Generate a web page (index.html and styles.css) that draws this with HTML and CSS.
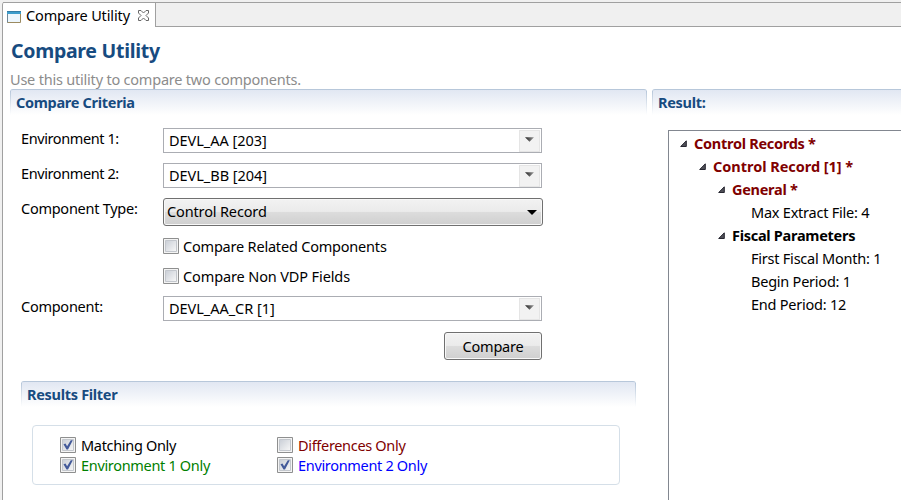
FILE: index.html
```html
<!DOCTYPE html>
<html lang="en">
<head>
<meta charset="utf-8">
<title>Compare Utility</title>
<link rel="stylesheet" href="styles.css">
</head>
<body>
<svg class="defs" width="0" height="0" aria-hidden="true">
  <defs>
    <linearGradient id="fade" x1="0" y1="0" x2="1" y2="0"><stop offset="0" stop-color="#222"/><stop offset="1" stop-color="#999"/></linearGradient>
    <linearGradient id="box" x1="0" y1="0" x2="1" y2="1"><stop offset="0" stop-color="#c9ced6"/><stop offset="1" stop-color="#f8f8f8"/></linearGradient>
    <symbol id="arrow" viewBox="0 0 10 5"><path d="M0 0h10L5 5z"/></symbol>
    <symbol id="twist" viewBox="0 0 7 7"><path d="M6.3.8v5.7H.7z" fill="#505058" stroke="#262630"/></symbol>
    <symbol id="off" viewBox="0 0 16 16"><path d="M.5.5h15v15H.5z" fill="#f4f4f4" stroke="#8e8f8f"/><path d="M2.5 2.5h11v11h-11z" fill="url(#box)" stroke="#c3c7cd"/></symbol>
    <symbol id="on" viewBox="0 0 16 16"><use href="#off"/><path d="M3.500 7.300l2-.8 1.600 2.800L10.800 3.200h2L8 12.600H6.500z" fill="#435a9a"/></symbol>
  </defs>
</svg>
<div class="app">
  <div class="tabs">
    <div class="tab">
      <svg class="window" width="14" height="12" viewBox="0 0 14 12"><path d="M.5.5h13v11H.5z" fill="#edf6fd" stroke="#9b8a60"/><path d="M0 0h14v3H0z" fill="#3d9dcc"/><path d="M0 0h14v1H0z" fill="#337da6"/><path d="M.5 3v8.500" stroke="#6f8796"/></svg>
      <span class="tab-name">Compare Utility</span>
      <svg width="11" height="11" viewBox="0 0 11 11" fill="#fff" stroke="#686868"><path d="M.5.5h2.500l2.500 2.500L8 .5h2.500V3L8 5.500 10.500 8v2.500H8L5.500 8 3 10.500H.5V8L3 5.500.5 3z"/></svg>
    </div>
    <div class="tab-rest"></div>
  </div>
  <h1>Compare Utility</h1>
  <p class="sub">Use this utility to compare two components.</p>
  <main>
    <section class="criteria">
      <h2 class="bar">Compare Criteria</h2>
      <div class="form">
        <div class="row"><label>Environment 1:</label><div class="field"><span>DEVL_AA [203]</span><i><svg width="9" height="5" fill="url(#fade)"><use href="#arrow"/></svg></i></div></div>
        <div class="row"><label>Environment 2:</label><div class="field"><span>DEVL_BB [204]</span><i><svg width="9" height="5" fill="url(#fade)"><use href="#arrow"/></svg></i></div></div>
        <div class="row type"><label class="long">Component Type:</label><div class="select"><span>Control Record</span><svg width="10" height="5"><use href="#arrow"/></svg></div></div>
        <div class="check solo"><svg width="16" height="16"><use href="#off"/></svg><span>Compare Related Components</span></div>
        <div class="check solo"><svg width="16" height="16"><use href="#off"/></svg><span class="fields">Compare Non VDP Fields</span></div>
        <div class="row component"><label class="long">Component:</label><div class="field"><span>DEVL_AA_CR [1]</span><i><svg width="9" height="5" fill="url(#fade)"><use href="#arrow"/></svg></i></div></div>
        <button>Compare</button>
      </div>
      <div class="filter">
        <h2 class="bar">Results Filter</h2>
        <div class="options">
          <div class="check"><svg width="16" height="16"><use href="#on"/></svg><span>Matching Only</span></div>
          <div class="check red"><svg width="16" height="16"><use href="#off"/></svg><span>Differences Only</span></div>
          <div class="check green"><svg width="16" height="16"><use href="#on"/></svg><span>Environment 1 Only</span></div>
          <div class="check blue"><svg width="16" height="16"><use href="#on"/></svg><span>Environment 2 Only</span></div>
        </div>
      </div>
    </section>
    <section class="result">
      <h2 class="bar">Result:</h2>
      <div class="tree">
        <div class="node l1 changed"><svg width="7" height="7"><use href="#twist"/></svg><span>Control Records *</span></div>
        <div class="node l2 changed"><svg width="7" height="7"><use href="#twist"/></svg><span>Control Record [1] *</span></div>
        <div class="node l3 changed"><svg width="7" height="7"><use href="#twist"/></svg><span>General *</span></div>
        <div class="node leaf"><span>Max Extract File: 4</span></div>
        <div class="node l3"><svg width="7" height="7"><use href="#twist"/></svg><span>Fiscal Parameters</span></div>
        <div class="node leaf"><span>First Fiscal Month: 1</span></div>
        <div class="node leaf"><span>Begin Period: 1</span></div>
        <div class="node leaf"><span>End Period: 12</span></div>
      </div>
    </section>
  </main>
</div>
</body>
</html>
```
FILE: styles.css
```css
* { box-sizing: border-box; }
body { margin: 0; width: 901px; height: 500px; overflow: hidden; background: #f0f0f0; color: #000; font: 14.5px/20px "Noto Sans", "Open Sans", sans-serif; letter-spacing: -.23px; white-space: nowrap; }
svg { display: block; flex: none; }
.defs { position: absolute; }
.app { height: 498px; margin: 2px 0 0 2px; border-left: 1px solid #a0a0a0; background: #fff; border-top-left-radius: 3px; }
.tabs { display: flex; height: 25px; }
.tab { display: flex; align-items: center; width: 153px; padding-left: 4px; border: 1px solid #a0a0a0; border-width: 1px 1px 0 0; }
.window { margin-top: 3px; }
.tab-name { width: 104px; margin: 0 8px 0 5px; letter-spacing: -.13px; }
.tab-rest { flex: 1; background: #f0f0f0; border: 1px solid #a0a0a0; border-width: 1px 0; }
h1 { margin: 11px 0 0 8px; font-size: 19.5px; line-height: 26px; color: #174b80; letter-spacing: -.28px; }
.sub { margin: 5px 0 0 7px; color: #8c8c8c; letter-spacing: -.21px; }
main { display: flex; gap: 5px; margin-left: 7px; }
.criteria { flex: none; width: 637px; }
.result { flex: none; width: 255px; }
.bar { position: relative; margin: 0; height: 26px; padding: 2px 0 0 6px; border-top: 1px solid #b7c7da; border-radius: 3px 3px 0 0; background: linear-gradient(#e1e7f2, #fff); font-size: 14.5px; line-height: 20px; color: #174b80; letter-spacing: -.3px; }
.bar::before, .bar::after { content: ""; position: absolute; top: 1px; bottom: 0; width: 1px; background: linear-gradient(#b7c7da, #fff); }
.bar::before { left: 0; }
.bar::after { right: 0; }
.form { padding: 13px 0 0 11px; }
.row { display: flex; height: 35px; }
label { width: 142px; letter-spacing: -.4px; }
.long { letter-spacing: -.26px; }
.field { display: flex; align-items: center; justify-content: space-between; width: 379px; height: 25px; padding: 0 1px 0 5px; border: 1px solid #abadb3; letter-spacing: -.03px; }
.field i { display: flex; align-items: center; justify-content: center; width: 21px; height: 22px; background: #f2f2f2; border: 1px solid #e5e5e5; }
.field span, .select span { margin-top: -2px; }
.field i svg { margin-top: -2px; }
.type { height: 38px; }
.select, button { border: 1px solid #707070; border-radius: 3px; background: linear-gradient(#f2f2f2, #ebebeb 48%, #dddddd 49%, #cfcfcf); box-shadow: inset 0 0 0 1px #f8f8f8; }
.select { display: flex; align-items: center; justify-content: space-between; width: 380px; height: 28px; padding: 0 5px 0 3px; letter-spacing: -.14px; }
.check { display: flex; align-items: center; height: 20px; gap: 5px; letter-spacing: -.32px; }
.solo { margin: 0 0 10px 142px; gap: 4px; letter-spacing: -.2px; }
.fields { letter-spacing: -.12px; }
.check span { margin-top: -1px; }
.component { height: 36px; }
button { display: block; width: 98px; height: 28px; margin-left: 423px; padding: 0 0 1px; color: #000; font: inherit; letter-spacing: -.2px; }
.filter { width: 615px; margin: 21px 0 0 11px; }
.options { display: grid; grid-template-columns: 217px 1fr; grid-auto-rows: 20px; width: 588px; height: 60px; margin: 18px 0 0 11px; padding: 9px 0 0 27px; border: 1px solid #d5dfe8; border-radius: 4px; }
.red { color: #800000; }
.green { color: #008000; }
.blue { color: #00f; }
.tree { height: 371px; margin: 15px 0 0 16px; padding-top: 1px; border: 1px solid #828790; border-width: 1px 0 0 1px; }
.node { display: flex; align-items: center; height: 23px; font-weight: 700; letter-spacing: -.28px; }
.node svg { margin: 0 7px 0 0; }
.node span { margin-top: -1px; }
.l1 { padding-left: 11px; }
.l2 { padding-left: 30px; letter-spacing: -.03px; }
.l3 { padding-left: 49px; }
.leaf { padding-left: 82px; font-weight: 400; letter-spacing: -.23px; }
.changed { color: #800000; }
```
